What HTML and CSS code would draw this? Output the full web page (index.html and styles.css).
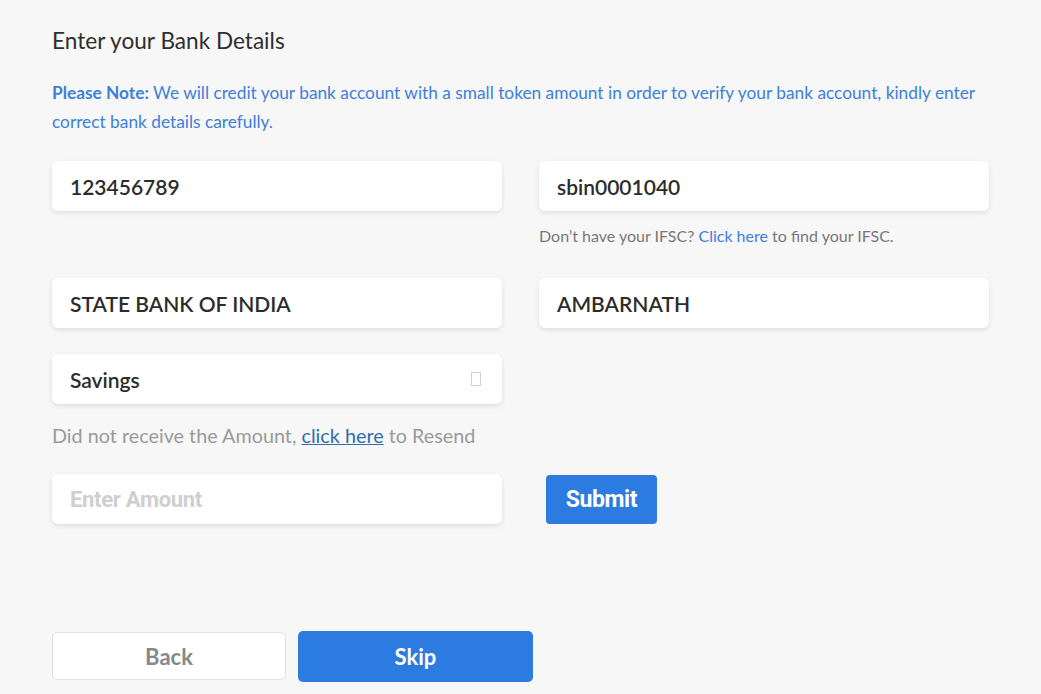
FILE: index.html
```html
<!DOCTYPE html>
<html>
<head>
<meta charset="utf-8">
<link rel="stylesheet" href="styles.css">
</head>
<body>
<div class="page">
  <h1 class="title">Enter your Bank Details</h1>
  <p class="note"><b>Please Note:</b> We will credit your bank account with a small token amount in order to verify your bank account, kindly enter correct bank details carefully.</p>

  <div class="grid">
    <div class="field"><div class="input">123456789</div></div>
    <div class="field">
      <div class="input">sbin0001040</div>
      <div class="help">Don’t have your IFSC? <span class="help-link">Click here</span> to find your IFSC.</div>
    </div>
  </div>

  <div class="grid row2">
    <div class="field"><div class="input">STATE BANK OF INDIA</div></div>
    <div class="field"><div class="input">AMBARNATH</div></div>
  </div>

  <div class="select-row">
    <div class="input select">Savings<span class="tofu"></span></div>
  </div>

  <p class="resend">Did not receive the Amount, <span class="resend-link">click here</span> to Resend</p>

  <div class="amount-row">
    <div class="input placeholder">Enter Amount</div>
    <div class="btn submit">Submit</div>
  </div>

  <div class="actions">
    <div class="btn back">Back</div>
    <div class="btn skip">Skip</div>
  </div>
</div>
</body>
</html>
```

FILE: styles.css
```css
html, body {
  margin: 0;
  padding: 0;
  background: #f7f7f7;
}
body {
  font-family: Lato, "Open Sans", sans-serif;
  color: #333;
}
.page {
  padding: 26px 52px 0 52px;
  width: 937px;
}
.title {
  margin: 0;
  font-size: 22.6px;
  font-weight: 400;
  line-height: 30px;
  color: #2e2e2e;
}
.note {
  margin: 22px 0 0 0;
  font-size: 17.3px;
  line-height: 29px;
  color: #3d7fd9;
}
.note b {
  font-weight: 700;
}
.grid {
  display: grid;
  grid-template-columns: 450px 450px;
  column-gap: 37px;
  margin-top: 25px;
}
.row2 {
  margin-top: 31px;
}
.input {
  box-sizing: border-box;
  height: 50px;
  background: #fff;
  border-radius: 6px;
  box-shadow: 0 2px 5px rgba(0,0,0,0.10);
  padding: 0 18px;
  display: flex;
  align-items: center;
  font-size: 21px;
  font-weight: 600;
  color: #2c2c2c;
}
.help {
  margin-top: 14px;
  font-size: 16px;
  line-height: 22px;
  color: #777;
  height: 22px;
}
.help-link {
  color: #3a80d9;
}
.select-row {
  margin-top: 26px;
  width: 450px;
}
.select {
  justify-content: space-between;
}
.tofu {
  width: 8px;
  height: 12px;
  border: 1px solid #d0d0d0;
  margin-right: 3px;
}
.resend {
  margin: 18px 0 0 0;
  font-size: 19.8px;
  line-height: 26px;
  color: #9a9a9a;
}
.resend-link {
  color: #2f6dae;
  text-decoration: underline;
}
.amount-row {
  margin-top: 26px;
  display: flex;
  align-items: center;
}
.amount-row .input {
  width: 450px;
}
.placeholder {
  color: #cfcfcf;
  font-family: Roboto, Lato, sans-serif;
  font-weight: 700;
  font-size: 22px;
  letter-spacing: -0.3px;
}
.btn {
  box-sizing: border-box;
  display: flex;
  align-items: center;
  justify-content: center;
  font-weight: 700;
  font-size: 22px;
  border-radius: 5px;
}
.submit {
  margin-left: 44px;
  width: 111px;
  height: 49px;
  background: #2c7be0;
  color: #fff;
  font-family: Roboto, Lato, sans-serif;
  font-size: 23px;
  letter-spacing: -0.4px;
  border-radius: 4px;
}
.actions {
  margin-top: 107px;
  display: flex;
  align-items: flex-start;
  gap: 12px;
}
.back {
  width: 234px;
  height: 48px;
  margin-top: 1px;
  background: #fff;
  border: 1px solid #e2e2e2;
  color: #888;
}
.skip {
  width: 235px;
  height: 51px;
  background: #2c7be0;
  color: #fff;
}
```
